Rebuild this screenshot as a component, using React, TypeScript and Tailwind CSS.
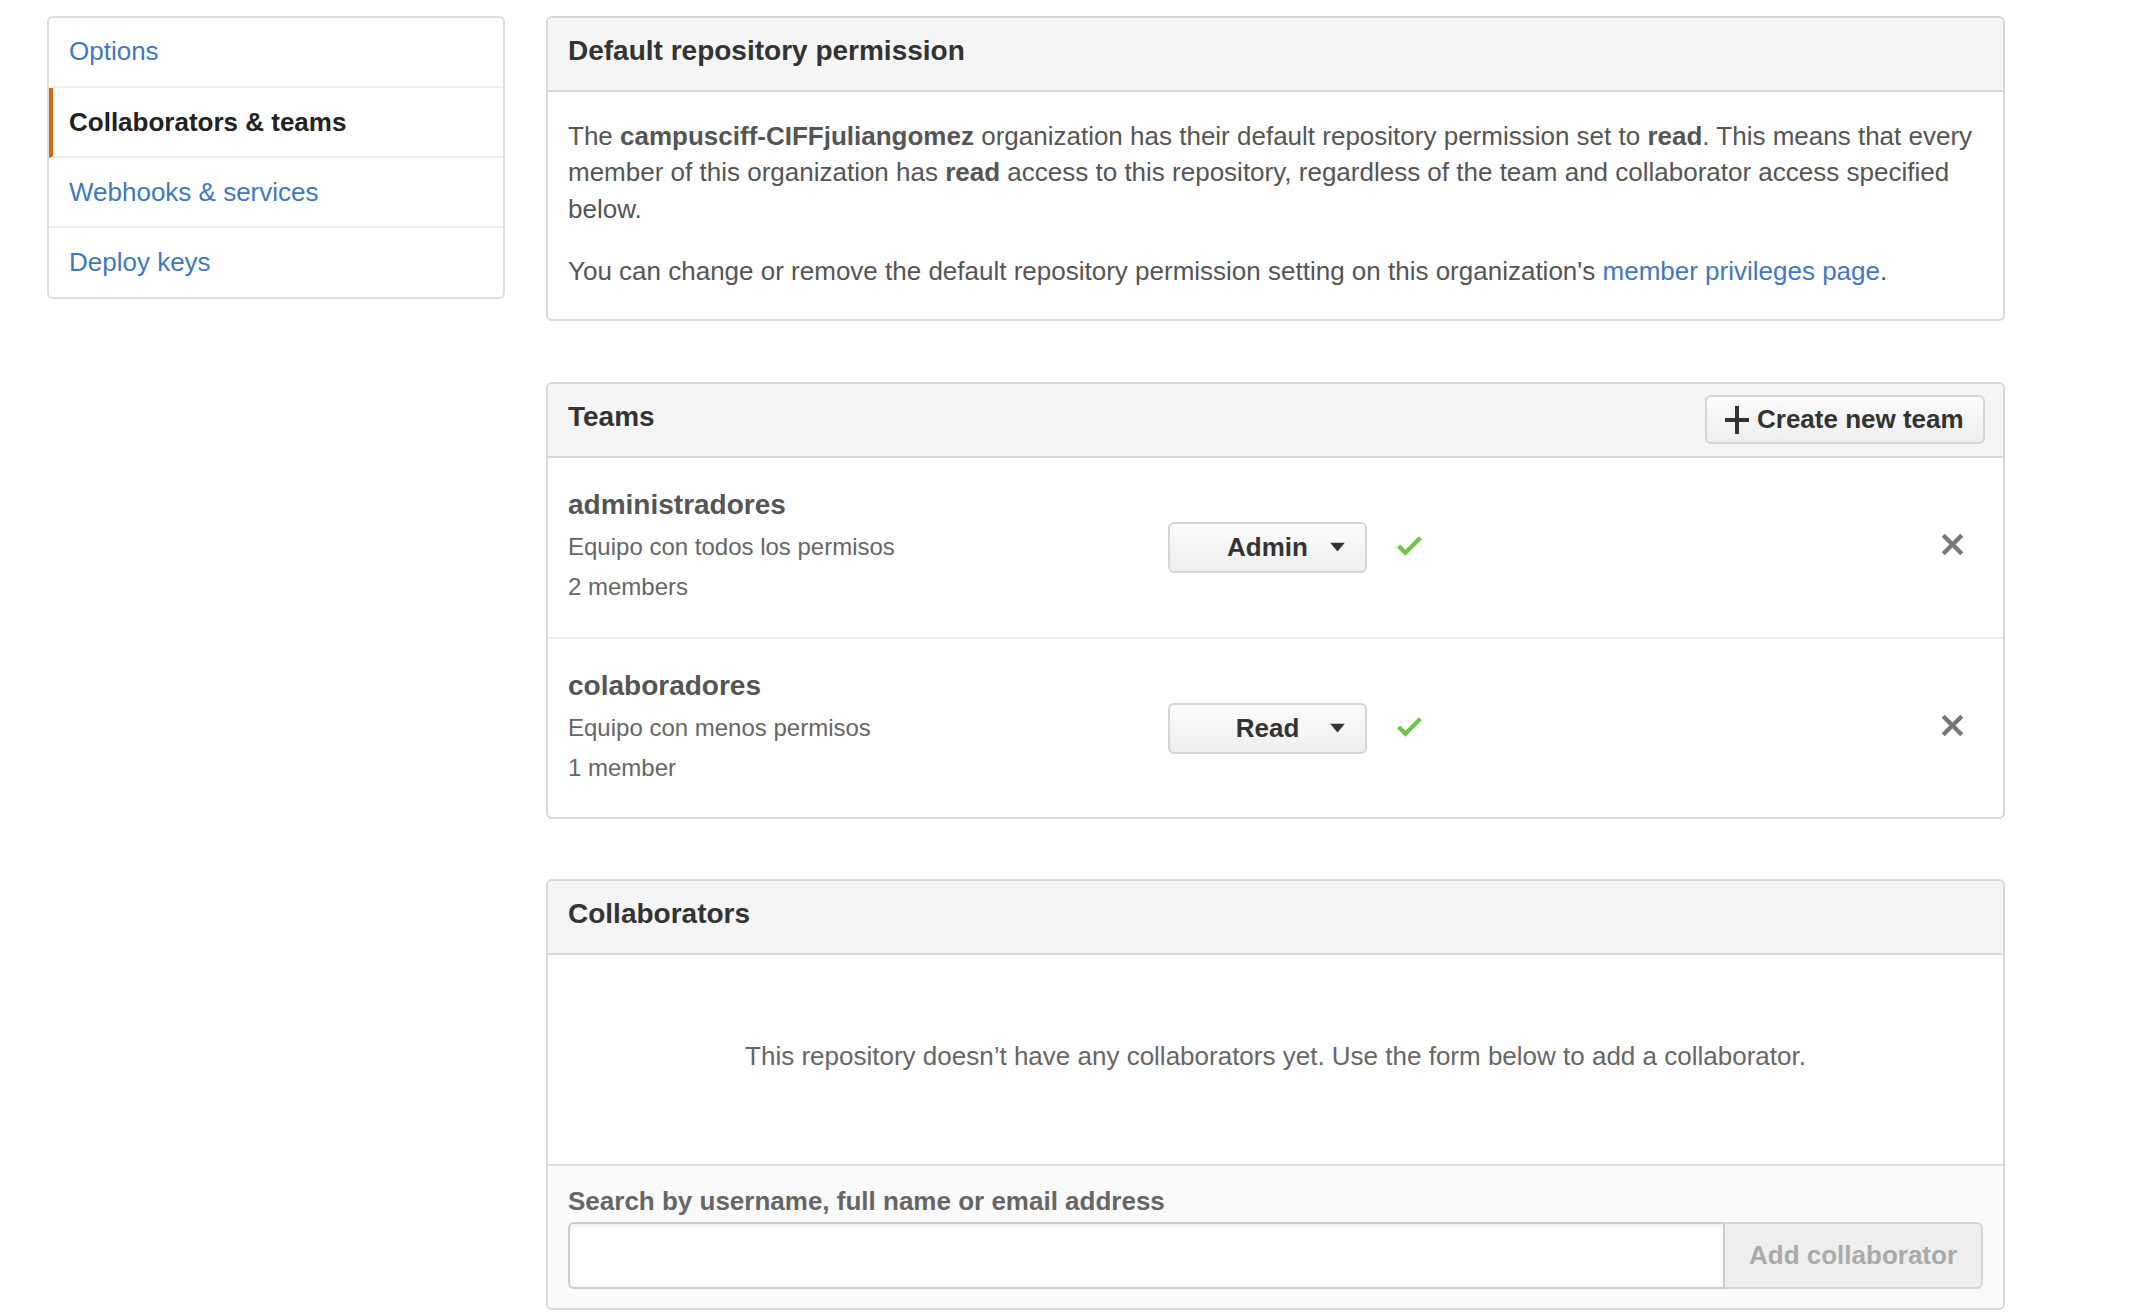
import React from 'react';

const teams = [
  { name: 'administradores', desc: 'Equipo con todos los permisos', members: '2 members', role: 'Admin' },
  { name: 'colaboradores', desc: 'Equipo con menos permisos', members: '1 member', role: 'Read' },
];

const PlusIcon = () => (
  <svg width="24" height="28" viewBox="0 0 12 14" className="shrink-0">
    <path d="M0 6h12v2H0z M5 0h2v14H5z" fill="#333" />
  </svg>
);

const Caret = () => (
  <svg width="15" height="9" viewBox="0 0 10 6">
    <path d="M0 0h10L5 6z" fill="#333" />
  </svg>
);

const Check = () => (
  <svg width="25" height="33" viewBox="0 0 12 16" className="shrink-0">
    <path d="M12 5l-8 8-4-4 1.5-1.5L4 10l6.5-6.5L12 5z" fill="#6cc644" />
  </svg>
);

const CloseX = () => (
  <svg width="25" height="33" viewBox="0 0 12 16" className="shrink-0">
    <path
      d="M7.48 8l3.75 3.75-1.48 1.48L6 9.48l-3.75 3.75-1.48-1.48L4.52 8 .77 4.25l1.48-1.48L6 6.52l3.75-3.75 1.48 1.48L7.48 8z"
      fill="#777"
    />
  </svg>
);

const BoxHeader = ({ title, children }: { title: string; children?: React.ReactNode }) => (
  <div className="h-[74px] bg-[#f5f5f5] border-b-2 border-[#d8d8d8] pl-[20px] pr-[18px] flex items-center justify-between rounded-t-[5px]">
    <h3 className="text-[28px] font-bold text-[#333] mb-[6px]">{title}</h3>
    {children}
  </div>
);

const Sidebar = () => (
  <div className="w-[458px] shrink-0 border-2 border-[#ddd] rounded-[6px] overflow-hidden bg-white text-[26px]">
    <div className="h-[70px] flex items-center px-[20px] pb-[2px] border-b-2 border-[#eee] text-[#4078c0]">Options</div>
    <div className="h-[70px] flex items-center pl-[16px] border-l-4 border-l-[#d26911] border-b-2 border-b-[#eee] font-bold text-[#222]">
      Collaborators &amp; teams
    </div>
    <div className="h-[70px] flex items-center px-[20px] border-b-2 border-[#eee] text-[#4078c0]">Webhooks &amp; services</div>
    <div className="h-[69px] flex items-center px-[20px] text-[#4078c0]">Deploy keys</div>
  </div>
);

export default function App() {
  return (
    <div className="min-h-screen bg-white flex items-start pl-[47px] pt-[16px] gap-[41px] font-['Liberation_Sans',Arial,sans-serif] text-[#333]">
      <Sidebar />

      <div className="w-[1459px] flex flex-col gap-[61px]">
        {/* default permission */}
        <div className="border-2 border-[#d8d8d8] rounded-[6px]">
          <BoxHeader title="Default repository permission" />
          <div className="px-[20px] pt-[26px] pb-[29px] text-[26px] leading-[36.4px] text-[#555]">
            <p className="mb-[26px]">
              The <b>campusciff-CIFFjuliangomez</b> organization has their default repository permission set to <b>read</b>. This
              means that every member of this organization has <b>read</b> access to this repository, regardless of the team and
              collaborator access specified below.
            </p>
            <p>
              You can change or remove the default repository permission setting on this organization's{' '}
              <a className="text-[#4078c0]">member privileges page</a>.
            </p>
          </div>
        </div>

        {/* teams */}
        <div className="border-2 border-[#d8d8d8] rounded-[6px] -mb-[1px]">
          <BoxHeader title="Teams">
            <button className="h-[49px] w-[280px] flex items-center gap-[8px] pl-[18px] border-2 border-[#d5d5d5] rounded-[6px] bg-gradient-to-b from-[#fcfcfc] to-[#eee] text-[26px] font-bold text-[#333]">
              <PlusIcon />
              Create new team
            </button>
          </BoxHeader>
          {teams.map((t, i) => (
            <div
              key={t.name}
              className={`flex items-center pl-[20px] pr-[38px] pt-[25px] ${i === 0 ? 'pb-[30px] border-b-2 border-[#eee]' : 'pb-[29px]'}`}
            >
              <div className="w-[600px] shrink-0">
                <div className="text-[28px] leading-[44px] font-bold text-[#555]">{t.name}</div>
                <div className="text-[24px] leading-[40px] text-[#666]">{t.desc}</div>
                <div className="text-[24px] leading-[40px] text-[#666]">{t.members}</div>
              </div>
              <button className="relative mt-[5px] h-[51px] w-[199px] shrink-0 flex items-center justify-center border-2 border-[#d5d5d5] rounded-[6px] bg-gradient-to-b from-[#fcfcfc] to-[#eee] text-[26px] font-bold text-[#333]">
                {t.role}
                <span className="absolute right-[20px] top-1/2 -translate-y-1/2 flex">
                  <Caret />
                </span>
              </button>
              <div className="ml-[30px] mt-[1px]">
                <Check />
              </div>
              <div className="flex-1" />
              <div>
                <CloseX />
              </div>
            </div>
          ))}
        </div>

        {/* collaborators */}
        <div className="border-2 border-[#d8d8d8] rounded-[6px] overflow-hidden">
          <BoxHeader title="Collaborators" />
          <div className="h-[209px] pb-[6px] flex items-center justify-center text-[26px] text-[#666]">
            This repository doesn’t have any collaborators yet. Use the form below to add a collaborator.
          </div>
          <div className="bg-[#fafafa] border-t-2 border-[#ddd] px-[20px] pt-[17px] pb-[19px]">
            <label className="block text-[26px] leading-[36px] font-bold text-[#666] mb-[3px]">
              Search by username, full name or email address
            </label>
            <div className="flex h-[67px]">
              <input className="flex-1 border-2 border-[#ccc] rounded-l-[6px] bg-white shadow-[inset_0_2px_4px_rgba(0,0,0,0.075)] outline-none" />
              <button className="w-[258px] border-2 border-l-0 border-[#d5d5d5] rounded-r-[6px] bg-[#eee] text-[26px] font-bold text-[#aaa]">
                Add collaborator
              </button>
            </div>
          </div>
        </div>
      </div>
    </div>
  );
}
